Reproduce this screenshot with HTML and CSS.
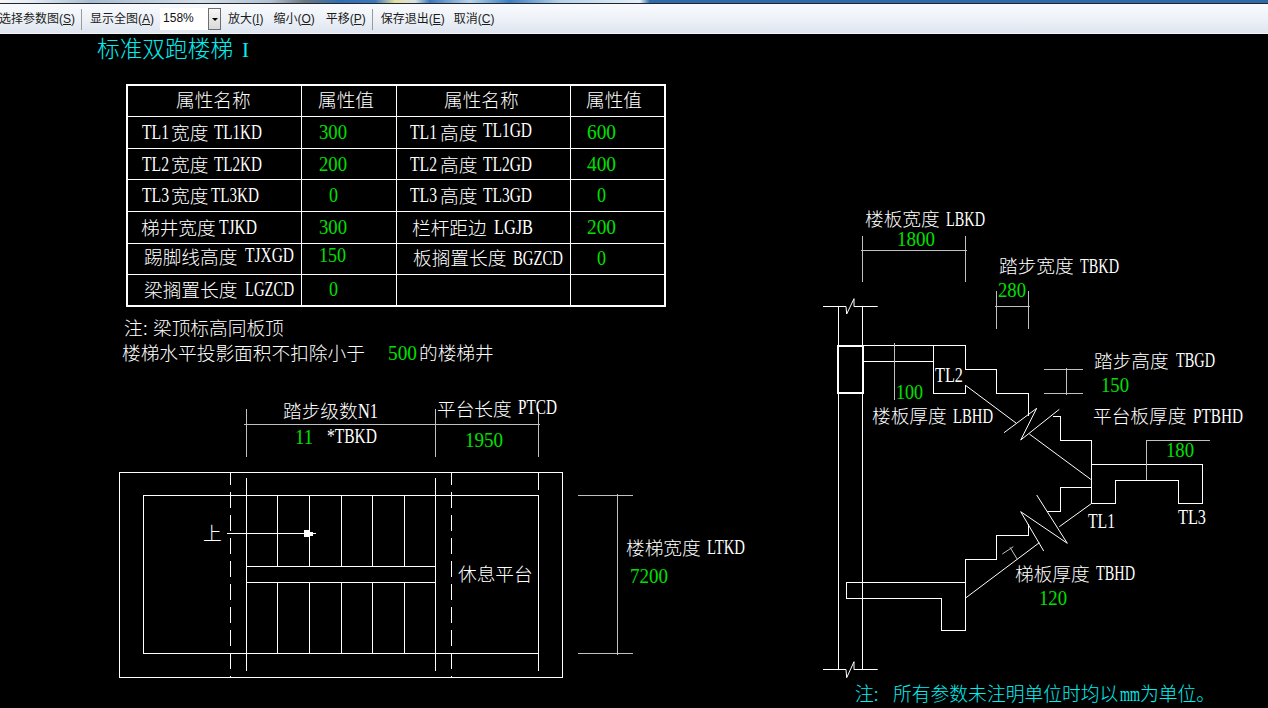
FILE: index.html
```html
<!DOCTYPE html>
<html lang="zh-CN">
<head>
<meta charset="utf-8">
<title>标准双跑楼梯 I</title>
<link rel="stylesheet" href="styles.css">
</head>
<body>
<div class="strip"></div>
<div class="toolbar">
  <span class="tool first">选择参数图(<u>S</u>)</span>
  <span class="sep sep1"></span>
  <span class="tool show">显示全图(<u>A</u>)</span>
  <span class="combo"><span class="combo-value">158%</span><span class="combo-btn"><span class="combo-arrow"></span></span></span>
  <span class="tool zoomin">放大(<u>I</u>)</span>
  <span class="tool zoomout">缩小(<u>O</u>)</span>
  <span class="tool pan">平移(<u>P</u>)</span>
  <span class="sep sep2"></span>
  <span class="tool save">保存退出(<u>E</u>)</span>
  <span class="tool cancel">取消(<u>C</u>)</span>
</div>
<main class="canvas">
<svg class="drawing" width="1268" height="674" viewBox="0 34 1268 674" xmlns="http://www.w3.org/2000/svg">
  <!-- title -->
  <text class="title" y="57"><tspan x="97">标准双跑楼梯</tspan> <tspan class="lat" x="242" textLength="7" lengthAdjust="spacingAndGlyphs">I</tspan></text>

  <!-- parameter table -->
  <g class="ln">
    <rect class="thick" x="127" y="85" width="538" height="220.5"/>
    <path d="M301.5 85V305M396.5 85V305M570.5 85V305M127 116.5H665M127 148.5H665M127 179.5H665M127 211.5H665M127 243.5H665M127 274.5H665"/>
  </g>
  <text class="t" y="107"><tspan x="176">属性名称</tspan></text>
  <text class="t" y="107"><tspan x="318">属性值</tspan></text>
  <text class="t" y="107"><tspan x="444">属性名称</tspan></text>
  <text class="t" y="107"><tspan x="586">属性值</tspan></text>

  <text class="t" y="140"><tspan class="lat" x="142" y="139" textLength="27" lengthAdjust="spacingAndGlyphs">TL1</tspan><tspan x="171" y="140">宽度</tspan> <tspan class="lat" x="214" y="139" textLength="48" lengthAdjust="spacingAndGlyphs">TL1KD</tspan></text>
  <text class="t" y="172"><tspan class="lat" x="142" y="171" textLength="27" lengthAdjust="spacingAndGlyphs">TL2</tspan><tspan x="171" y="172">宽度</tspan> <tspan class="lat" x="214" y="171" textLength="48" lengthAdjust="spacingAndGlyphs">TL2KD</tspan></text>
  <text class="t" y="203"><tspan class="lat" x="142" y="202" textLength="27" lengthAdjust="spacingAndGlyphs">TL3</tspan><tspan x="171" y="203">宽度</tspan><tspan class="lat" x="211" y="202" textLength="48" lengthAdjust="spacingAndGlyphs">TL3KD</tspan></text>
  <text class="t" y="235"><tspan x="141">梯井宽度</tspan><tspan class="lat" x="219" y="234" textLength="38" lengthAdjust="spacingAndGlyphs">TJKD</tspan></text>
  <text class="t" y="264"><tspan x="144">踢脚线高度</tspan> <tspan class="lat" x="245" y="262" textLength="49" lengthAdjust="spacingAndGlyphs">TJXGD</tspan></text>
  <text class="t" y="297"><tspan x="144">梁搁置长度</tspan> <tspan class="lat" x="245" y="296" textLength="49" lengthAdjust="spacingAndGlyphs">LGZCD</tspan></text>

  <text class="lat g" x="319" y="139" textLength="28" lengthAdjust="spacingAndGlyphs">300</text>
  <text class="lat g" x="319" y="171" textLength="28" lengthAdjust="spacingAndGlyphs">200</text>
  <text class="lat g" x="329" y="202" textLength="9" lengthAdjust="spacingAndGlyphs">0</text>
  <text class="lat g" x="319" y="234" textLength="28" lengthAdjust="spacingAndGlyphs">300</text>
  <text class="lat g" x="319" y="262" textLength="27" lengthAdjust="spacingAndGlyphs">150</text>
  <text class="lat g" x="329" y="296" textLength="9" lengthAdjust="spacingAndGlyphs">0</text>

  <text class="t" y="140"><tspan class="lat" x="410" y="139" textLength="27" lengthAdjust="spacingAndGlyphs">TL1</tspan><tspan x="440" y="140">高度</tspan> <tspan class="lat" x="483" y="137" textLength="49" lengthAdjust="spacingAndGlyphs">TL1GD</tspan></text>
  <text class="t" y="172"><tspan class="lat" x="410" y="171" textLength="27" lengthAdjust="spacingAndGlyphs">TL2</tspan><tspan x="440" y="172">高度</tspan> <tspan class="lat" x="483" y="171" textLength="49" lengthAdjust="spacingAndGlyphs">TL2GD</tspan></text>
  <text class="t" y="203"><tspan class="lat" x="410" y="202" textLength="27" lengthAdjust="spacingAndGlyphs">TL3</tspan><tspan x="440" y="203">高度</tspan> <tspan class="lat" x="483" y="202" textLength="49" lengthAdjust="spacingAndGlyphs">TL3GD</tspan></text>
  <text class="t" y="235"><tspan x="412">栏杆距边</tspan> <tspan class="lat" x="494" y="234" textLength="39" lengthAdjust="spacingAndGlyphs">LGJB</tspan></text>
  <text class="t" y="265"><tspan x="413">板搁置长度</tspan> <tspan class="lat" x="513" y="265" textLength="50" lengthAdjust="spacingAndGlyphs">BGZCD</tspan></text>

  <text class="lat g" x="587" y="139" textLength="29" lengthAdjust="spacingAndGlyphs">600</text>
  <text class="lat g" x="587" y="171" textLength="29" lengthAdjust="spacingAndGlyphs">400</text>
  <text class="lat g" x="597" y="202" textLength="9" lengthAdjust="spacingAndGlyphs">0</text>
  <text class="lat g" x="587" y="234" textLength="29" lengthAdjust="spacingAndGlyphs">200</text>
  <text class="lat g" x="597" y="265" textLength="9" lengthAdjust="spacingAndGlyphs">0</text>

  <!-- notes -->
  <text class="t" y="335"><tspan x="124">注</tspan><tspan x="143">:</tspan><tspan x="153">梁顶标高同板顶</tspan></text>
  <text class="t" y="360"><tspan x="122">楼梯水平投影面积不扣除小于</tspan> <tspan class="lat g" x="388" textLength="29" lengthAdjust="spacingAndGlyphs">500</tspan><tspan x="419">的楼梯井</tspan></text>

  <!-- plan view -->
  <g class="ln">
    <rect x="119.5" y="472.5" width="443" height="205"/>
    <rect x="143.5" y="495.5" width="395" height="158"/>
    <path class="dash" d="M230.5 472V677M451.5 472V677"/>
    <path d="M246.5 478V671M435.5 478V671M538.5 472V490M538.5 653V671"/>
    <path d="M277.5 495V566M309.5 495V566M341.5 495V566M372.5 495V566M404.5 495V566"/>
    <path d="M277.5 583V653M309.5 583V653M341.5 583V653M372.5 583V653M404.5 583V653"/>
    <path d="M246.5 566.5H435.5M246.5 582.5H435.5"/>
    <path d="M227 533.5H316"/>
    <path class="solid" d="M304 530H309V531.5H313V535.5H309V537H304Z"/>
  </g>
  <g class="dm">
    <path d="M246.5 409V457M435.5 409V457M538.5 409V457M244 424.5H540"/>
    <path d="M578 495.5H632.5M578 653.5H632.5M617.5 494V655"/>
  </g>
  <text class="t" y="540"><tspan x="203">上</tspan></text>
  <text class="t" y="418"><tspan x="283">踏步级数</tspan><tspan class="lat" x="358" textLength="20" lengthAdjust="spacingAndGlyphs">N1</tspan></text>
  <text class="lat g" x="295" y="444" textLength="18" lengthAdjust="spacingAndGlyphs">11</text>
  <text class="lat w" x="327" y="443" textLength="50" lengthAdjust="spacingAndGlyphs">*TBKD</text>
  <text class="t" y="416"><tspan x="437">平台长度</tspan> <tspan class="lat" x="518" y="414" textLength="39" lengthAdjust="spacingAndGlyphs">PTCD</tspan></text>
  <text class="lat g" x="465" y="447" textLength="38" lengthAdjust="spacingAndGlyphs">1950</text>
  <text class="t" y="581"><tspan x="458">休息平台</tspan></text>
  <text class="t" y="555"><tspan x="626">楼梯宽度</tspan> <tspan class="lat" x="707" y="554" textLength="38" lengthAdjust="spacingAndGlyphs">LTKD</tspan></text>
  <text class="lat g" x="630" y="583" textLength="38" lengthAdjust="spacingAndGlyphs">7200</text>

  <!-- section view -->
  <g class="ln">
    <path d="M823 306.5H846L846.7 314L854 298.7V306.5H877.7"/>
    <path d="M823 669.5H846L846.7 677.7L854 661.7V669.5H877.7"/>
    <path d="M838.5 306.5V345M838.5 392V669.5M862.5 306.5V669.5"/>
    <rect class="thick" x="838" y="345.5" width="24.5" height="47"/>
    <path d="M862 345.5H965.5V369.5H996.5V393.5H1028.5V416M862 361.5H933.5"/>
    <path d="M933.5 345.5V393.5H965.5V385"/>
    <path d="M966 385.7L1016 423"/>
    <path d="M1004 432.7L1036.7 408.3L1020.7 440L1059.3 409.3"/>
    <path d="M1029.3 434L1090.7 479.3"/>
    <path d="M1052.7 416.5H1060.5V440.5H1091.5V503.5"/>
    <path d="M1091.5 464.5H1202.5V503.5H1178.5V480.5H1115.5V503.5H1091.5"/>
    <path d="M1091.5 487.5H1060.5V511.5H1046.7"/>
    <path d="M1036.7 495L1067.3 543.3L1020.7 511.7L1043.7 551"/>
    <path d="M1091.5 503.5L1059.3 526.7"/>
    <path d="M1039.3 542.7L966 597.7"/>
    <path d="M1028.5 524V535.5H996.5V559.5H965.5V630.5H941.5V598.5H846.5V582.5H965.5"/>
  </g>
  <g class="dm">
    <path d="M862.5 236V282M965.5 236V282M861 250.5H967"/>
    <path d="M996.5 291V329M1028.5 291V329M995 306.5H1030"/>
    <path d="M1044 369.5H1082.7M1044 393.5H1082.7M1066.5 368V395"/>
    <path d="M1146.5 440V480M1146.5 440.5H1210"/>
    <path d="M894 343V400"/>
    <path d="M1002.3 554L1013.3 546.7M1010 547.3L1017.3 559.3"/>
  </g>
  <text class="t" y="226"><tspan x="865">楼板宽度</tspan> <tspan class="lat" x="946" textLength="39" lengthAdjust="spacingAndGlyphs">LBKD</tspan></text>
  <text class="lat g" x="897" y="245.5" textLength="38" lengthAdjust="spacingAndGlyphs">1800</text>
  <text class="t" y="273"><tspan x="999">踏步宽度</tspan> <tspan class="lat" x="1080" textLength="39" lengthAdjust="spacingAndGlyphs">TBKD</tspan></text>
  <text class="lat g" x="998" y="296.5" textLength="28" lengthAdjust="spacingAndGlyphs">280</text>
  <text class="lat w" x="935" y="381.5" textLength="28" lengthAdjust="spacingAndGlyphs">TL2</text>
  <text class="lat g" x="896" y="399" textLength="27" lengthAdjust="spacingAndGlyphs">100</text>
  <text class="t" y="423"><tspan x="872">楼板厚度</tspan> <tspan class="lat" x="953" textLength="40" lengthAdjust="spacingAndGlyphs">LBHD</tspan></text>
  <text class="t" y="368"><tspan x="1094">踏步高度</tspan> <tspan class="lat" x="1176" y="367" textLength="39" lengthAdjust="spacingAndGlyphs">TBGD</tspan></text>
  <text class="lat g" x="1101" y="391.5" textLength="28" lengthAdjust="spacingAndGlyphs">150</text>
  <text class="t" y="423"><tspan x="1093">平台板厚度</tspan> <tspan class="lat" x="1193" textLength="50" lengthAdjust="spacingAndGlyphs">PTBHD</tspan></text>
  <text class="lat g" x="1166" y="457" textLength="28" lengthAdjust="spacingAndGlyphs">180</text>
  <text class="lat w" x="1088" y="527.5" textLength="27" lengthAdjust="spacingAndGlyphs">TL1</text>
  <text class="lat w" x="1178" y="524" textLength="28" lengthAdjust="spacingAndGlyphs">TL3</text>
  <text class="t" y="581"><tspan x="1015">梯板厚度</tspan> <tspan class="lat" x="1096" y="580" textLength="39" lengthAdjust="spacingAndGlyphs">TBHD</tspan></text>
  <text class="lat g" x="1039" y="605" textLength="28" lengthAdjust="spacingAndGlyphs">120</text>

  <text class="note" y="701"><tspan x="855">注:</tspan> <tspan x="893">所有参数未注明单位时均以</tspan><tspan class="lat" x="1120" textLength="20" lengthAdjust="spacingAndGlyphs">mm</tspan><tspan x="1140">为单位。</tspan></text>
</svg>
</main>
</body>
</html>
```
FILE: styles.css
```css
* { box-sizing: border-box; }
html, body { margin: 0; padding: 0; }
body {
  width: 1268px;
  height: 708px;
  overflow: hidden;
  background: #000;
  display: flex;
  flex-direction: column;
  font-family: "Liberation Sans", "Noto Sans CJK SC", sans-serif;
}

/* strip of the window behind, seen through the glass frame */
.strip {
  height: 4px;
  flex: none;
  border-bottom: 1px solid #20262c;
  background: linear-gradient(90deg,
    #f4f6f8 0, #e6edf4 30px, #a9bdd2 90px, #d2dde8 200px, #b3c2d2 270px,
    #6e7680 305px, #2f6fb3 340px, #3a78b8 375px, #e4dfa0 395px, #d8e2e6 415px,
    #3a78bb 430px, #b9d3ea 470px, #3d7dc0 510px, #b6d2ea 560px, #e5f0f8 640px,
    #2f6aa8 650px, #2f6aa8 1268px);
}

.toolbar {
  height: 30px;
  flex: none;
  display: flex;
  align-items: center;
  padding-top: 1px;
  font-size: 12px;
  color: #1c1c1c;
  background: linear-gradient(180deg, #f8fafd 0, #eef2f8 50%, #dee5ef 100%);
  border-bottom: 1px solid #f2f4f7;
}
.tool { white-space: nowrap; line-height: 16px; }
.first { margin-left: -1px; }
.sep { width: 1px; height: 21px; background: #9a9a9a; flex: none; }
.sep1 { margin-left: 6px; }
.show { margin-left: 8px; }
.combo {
  display: flex;
  width: 61px;
  height: 22px;
  margin-left: 6px;
  flex: none;
  background: #fff;
}
.combo-value { flex: 1; padding-left: 3px; line-height: 21px; color: #111; }
.combo-btn {
  width: 13px;
  display: flex;
  align-items: center;
  justify-content: center;
  border: 1px solid #6d6d6d;
  background: linear-gradient(180deg, #f7f7f7, #d9d9d9);
}
.combo-arrow {
  width: 0;
  height: 0;
  border-left: 3.5px solid transparent;
  border-right: 3.5px solid transparent;
  border-top: 3.5px solid #000;
}
.zoomin { margin-left: 7px; }
.zoomout { margin-left: 10px; }
.pan { margin-left: 11px; }
.sep2 { margin-left: 6px; }
.save { margin-left: 8px; }
.cancel { margin-left: 9px; }

.canvas { flex: 1; background: #000; }
.drawing { display: block; }

.ln { fill: none; stroke: #fff; stroke-width: 1; shape-rendering: crispEdges; }
.ln path[d*="L"] { shape-rendering: auto; }
.thick { stroke-width: 2; }
.dash { stroke-dasharray: 16 7; stroke-dashoffset: 3; }
.solid { fill: #fff; stroke: none; }
.dm { fill: none; stroke: #c0c0c0; stroke-width: 1; shape-rendering: crispEdges; }
.dm path[d*="L"] { shape-rendering: auto; }

text { font-family: "Noto Sans CJK SC", "Liberation Sans", sans-serif; font-weight: 300; }
.t { fill: #fff; font-size: 18.7px; }
.title { fill: #00f0f0; font-size: 22.7px; }
.note { fill: #00f0f0; font-size: 18.8px; }
.lat { font-family: "Liberation Serif", serif; font-size: 20px; font-weight: 400; }
.title .lat { font-size: 22px; }
.g { fill: #00e000; }
.w { fill: #fff; }
```
